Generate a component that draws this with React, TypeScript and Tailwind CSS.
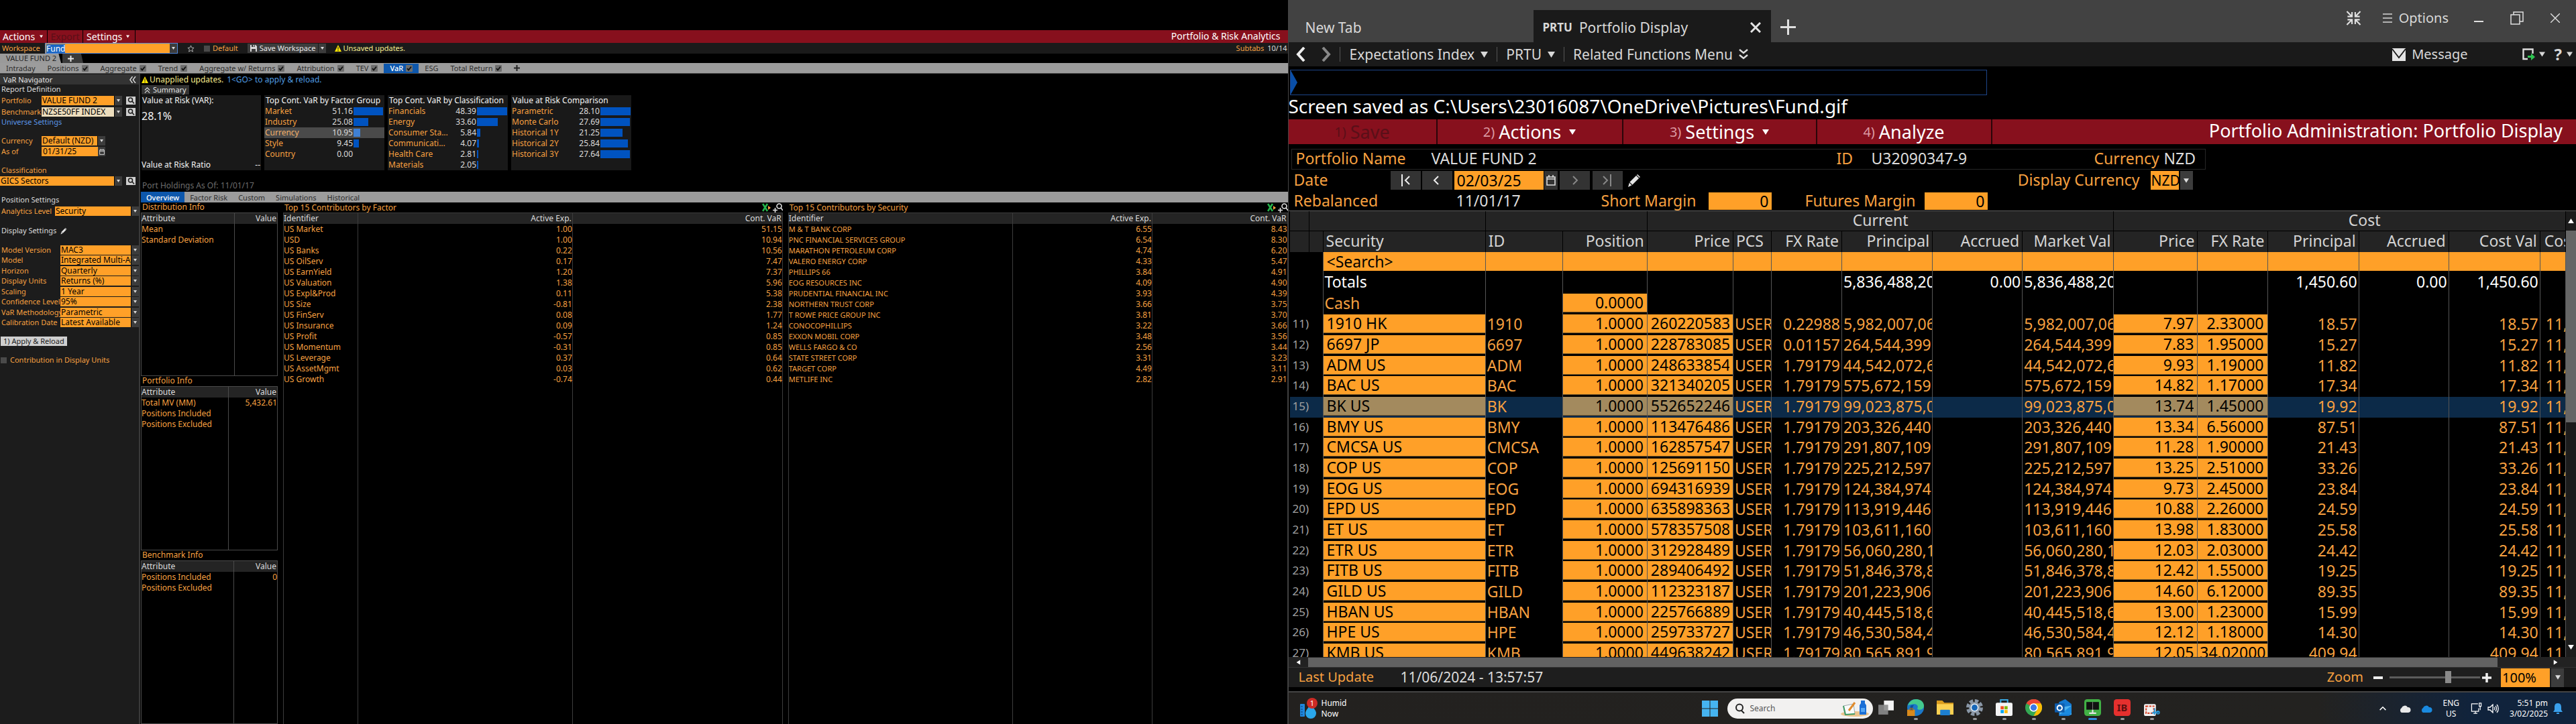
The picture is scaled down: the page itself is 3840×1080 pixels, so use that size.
import React from 'react';

type Row = [string, string, string];

/* ---------- shared small parts ---------- */

function Tri({ className = '' }: { className?: string }) {
  return (
    <svg viewBox="0 0 10 8" className={className} aria-hidden="true">
      <path d="M0 0h10L5 8z" fill="currentColor" />
    </svg>
  );
}

function Warn() {
  return (
    <svg viewBox="0 0 12 12" className="h-[10px] w-[10px] shrink-0" aria-hidden="true">
      <path d="M6 0l6 12H0z" fill="#ffe600" />
      <path d="M6 4v4M6 9v2" stroke="#222" strokeWidth="1.4" />
    </svg>
  );
}

function Pencil({ className = '' }: { className?: string }) {
  return (
    <svg viewBox="0 0 22 22" className={className} aria-hidden="true">
      <path d="M1 21l2-7 12-12 4 4L7 18z" fill="#e4e4e4" />
      <path d="M13 3l5 5M3 14l4 4" stroke="#111" strokeWidth="1.2" />
    </svg>
  );
}

function Calendar({ className = '' }: { className?: string }) {
  return (
    <svg viewBox="0 0 14 16" className={className} fill="none" stroke="#ddd" strokeWidth="1.6" aria-hidden="true">
      <path d="M1 3h12v12H1zM1 6h12M4 0v4M10 0v4" />
    </svg>
  );
}

function FindButton({ label }: { label: string }) {
  return (
    <button aria-label={label} className="flex h-[12px] w-[14px] items-center justify-center bg-[#cfcfcf]">
      <svg viewBox="0 0 14 12" className="h-[12px] w-[14px]" fill="none" stroke="#1a1a1a" strokeWidth="1.5">
        <circle cx="6.5" cy="5" r="3" />
        <path d="M9 7l3 3.5" />
      </svg>
    </button>
  );
}

function Select({
  id,
  value,
  className = '',
  field = 'bg-[#ffa028]',
}: {
  id: string;
  value: string;
  className?: string;
  field?: string;
}) {
  return (
    <span className={`flex h-[14px] min-w-0 ${className}`}>
      <select
        id={id}
        aria-label={id}
        defaultValue={value}
        className={`h-full w-0 min-w-0 flex-1 appearance-none overflow-hidden pl-px text-[12px] leading-[14px] text-black outline-none ${field}`}
      >
        <option>{value}</option>
      </select>
      <span className="flex w-[12px] shrink-0 items-center justify-center border-l border-black bg-[#3c3c3c] text-[#d8d8d8]">
        <Tri className="h-[4px] w-[5px]" />
      </span>
    </span>
  );
}

/* ---------- left window ---------- */

const subTabs: { name: string; check: boolean; active?: boolean }[] = [
  { name: 'Intraday', check: false },
  { name: 'Positions', check: true },
  { name: 'Aggregate', check: true },
  { name: 'Trend', check: true },
  { name: 'Aggregate w/ Returns', check: true },
  { name: 'Attribution', check: true },
  { name: 'TEV', check: true },
  { name: 'VaR', check: true, active: true },
  { name: 'ESG', check: false },
  { name: 'Total Return', check: true },
];

const displaySettings: [string, string][] = [
  ['Model Version', 'MAC3'],
  ['Model', 'Integrated Multi-Asset'],
  ['Horizon', 'Quarterly'],
  ['Display Units', 'Returns (%)'],
  ['Scaling', '1 Year'],
  ['Confidence Level', '95%'],
  ['VaR Methodology', 'Parametric'],
  ['Calibration Date', 'Latest Available'],
];

const factors: Row[] = [
  ['US Market', '1.00', '51.15'],
  ['USD', '1.00', '10.94'],
  ['US Banks', '0.22', '10.56'],
  ['US OilServ', '0.17', '7.47'],
  ['US EarnYield', '1.20', '7.37'],
  ['US Valuation', '1.38', '5.96'],
  ['US Expl&Prod', '0.11', '5.38'],
  ['US Size', '-0.81', '2.38'],
  ['US FinServ', '0.08', '1.77'],
  ['US Insurance', '0.09', '1.24'],
  ['US Profit', '-0.57', '0.85'],
  ['US Momentum', '-0.31', '0.85'],
  ['US Leverage', '0.37', '0.64'],
  ['US AssetMgmt', '0.03', '0.62'],
  ['US Growth', '-0.74', '0.44'],
];

const securities: Row[] = [
  ['M & T BANK CORP', '6.55', '8.43'],
  ['PNC FINANCIAL SERVICES GROUP', '6.54', '8.30'],
  ['MARATHON PETROLEUM CORP', '4.74', '6.20'],
  ['VALERO ENERGY CORP', '4.33', '5.47'],
  ['PHILLIPS 66', '3.84', '4.91'],
  ['EOG RESOURCES INC', '4.09', '4.90'],
  ['PRUDENTIAL FINANCIAL INC', '3.93', '4.39'],
  ['NORTHERN TRUST CORP', '3.66', '3.75'],
  ['T ROWE PRICE GROUP INC', '3.81', '3.70'],
  ['CONOCOPHILLIPS', '3.22', '3.66'],
  ['EXXON MOBIL CORP', '3.48', '3.56'],
  ['WELLS FARGO & CO', '2.56', '3.44'],
  ['STATE STREET CORP', '3.31', '3.23'],
  ['TARGET CORP', '4.49', '3.11'],
  ['METLIFE INC', '2.82', '2.91'],
];

type Bar = { name: string; value: string; width: number; selected?: boolean };

function BarCard({ title, rows }: { title: string; rows: Bar[] }) {
  return (
    <section className="h-[112px] w-[179px] overflow-hidden bg-[#191919]">
      <h3 className="h-[16px] pl-[2px] text-[12px] leading-[16px] whitespace-nowrap text-[#f4f4f4]">{title}</h3>
      {rows.map((r) => (
        <div
          key={r.name}
          className={`flex h-[16px] items-center whitespace-nowrap ${r.selected ? 'bg-[#4a4a4a] text-[#f3b069]' : 'text-[#f7a040]'}`}
        >
          <span className="pl-px">{r.name}</span>
          <span className="flex-1 text-right text-[#dcdcdc]">{r.value}</span>
          <span className="w-[47px] shrink-0 pl-px">
            <span
              className={`block h-[12px] ${r.selected ? 'bg-[#3f80d4]' : 'bg-[#0053c0]'}`}
              style={{ width: r.width }}
            />
          </span>
        </div>
      ))}
    </section>
  );
}

function InfoTable({ title, rows, first }: { title: string; rows: [string, string][]; first: string }) {
  return (
    <section className="flex min-h-0 flex-1 flex-col">
      <h3 className="h-[15px] pl-[2px] leading-[14px] text-[#f7a040]">{title}</h3>
      <div className="min-h-0 flex-1">
        <table className="h-full w-full table-fixed border-separate border-spacing-0 border border-[#4a4a4a]">
          <colgroup>
            <col className={first} />
            <col />
          </colgroup>
          <thead className="bg-[#242424] text-[#dcdcdc]">
            <tr className="h-[16px]">
              <th className="border-r border-[#4a4a4a] text-left font-normal">Attribute</th>
              <th className="pr-px text-right font-normal">Value</th>
            </tr>
          </thead>
          <tbody className="text-[#f7a040]">
            {rows.map(([k, v]) => (
              <tr key={k} className="h-[16px]">
                <td className="border-r border-[#4a4a4a] whitespace-nowrap">{k}</td>
                <td className="text-right">{v}</td>
              </tr>
            ))}
            <tr>
              <td className="border-r border-[#4a4a4a]" />
              <td />
            </tr>
          </tbody>
        </table>
      </div>
    </section>
  );
}

function ContribTable({ title, rows, a, b, nameSize }: { title: string; rows: Row[]; a: string; b: string; nameSize: string }) {
  return (
    <section className="flex min-h-0 min-w-0 flex-1 flex-col">
      <div className="flex h-[15px] items-center justify-between pl-[2px]">
        <h3 className="text-[12px] leading-[14px] text-[#f7a040]">{title}</h3>
        <span className="flex items-center gap-[3px]">
          <button aria-label="Export to spreadsheet">
            <svg viewBox="0 0 13 13" className="h-[13px] w-[13px]" fill="none">
              <path d="M1 1l7 11M8 1L1 12" stroke="#25b34b" strokeWidth="2.6" />
              <path d="M9 4l4 3-4 3z" fill="#f7a040" />
            </svg>
          </button>
          <button aria-label="Search rows">
            <svg viewBox="0 0 15 14" className="h-[14px] w-[15px]" fill="none" stroke="#e4e4e4" strokeWidth="1.6">
              <circle cx="9.5" cy="4.5" r="3.5" />
              <path d="M12 7l3 4M0 10.5h7M3.500 7v7" />
            </svg>
          </button>
        </span>
      </div>
      <div className="min-h-0 flex-1">
        <table className="h-full w-full table-fixed border-separate border-spacing-0 border-x border-t border-[#3c3c3c]">
          <colgroup>
            <col className={a} />
            <col className={b} />
            <col />
          </colgroup>
          <thead className="bg-[#242424] text-[#dcdcdc]">
            <tr className="h-[16px]">
              <th className="border-r border-[#3c3c3c] text-left font-normal">Identifier</th>
              <th className="border-r border-[#3c3c3c] pr-px text-right font-normal">Active Exp.</th>
              <th className="pr-px text-right font-normal">Cont. VaR</th>
            </tr>
          </thead>
          <tbody className="text-[#f7a040]">
            {rows.map(([n, x, y]) => (
              <tr key={n} className="h-[16px]">
                <td className={`border-r border-[#3c3c3c] whitespace-nowrap ${nameSize}`}>{n}</td>
                <td className="border-r border-[#3c3c3c] text-right">{x}</td>
                <td className="text-right">{y}</td>
              </tr>
            ))}
            <tr>
              <td className="border-r border-[#3c3c3c]" />
              <td className="border-r border-[#3c3c3c]" />
              <td />
            </tr>
          </tbody>
        </table>
      </div>
    </section>
  );
}

function Navigator() {
  return (
    <aside className="flex w-[209px] shrink-0 flex-col border-r-2 border-[#3a3a3a] bg-[#1c1c1c] text-[11px] whitespace-nowrap text-[#f7a040]">
      <div className="mt-px flex h-[15px] items-center justify-between bg-[#333] pl-[5px] pr-[4px] text-[#e4e4e4]">
        <h2>VaR Navigator</h2>
        <button aria-label="Collapse navigator">
          <svg viewBox="0 0 10 10" className="h-[10px] w-[10px]" fill="none" stroke="#ddd" strokeWidth="1.4">
            <path d="M4.500 0L.8 5l3.700 5M9 0L5.300 5 9 10" />
          </svg>
        </button>
      </div>
      <div className="h-[16px] pl-[2px] leading-[14px] text-[#dcdcdc]">Report Definition</div>
      <div className="flex h-[16px] items-center pl-[2px]">
        <label htmlFor="Portfolio" className="w-[60px]">Portfolio</label>
        <Select id="Portfolio" value="VALUE FUND 2" className="w-[120px]" />
        <span className="ml-[6px] flex"><FindButton label="Find portfolio" /></span>
      </div>
      <div className="flex h-[17px] items-center pl-[2px]">
        <label htmlFor="Benchmark" className="w-[60px]">Benchmark</label>
        <Select id="Benchmark" value="NZSE50FF INDEX" field="bg-[#ecddbd]" className="w-[120px]" />
        <span className="ml-[6px] flex"><FindButton label="Find benchmark" /></span>
      </div>
      <a href="#universe" className="h-[16px] pl-[2px] leading-[14px] text-[#5a97ea]">Universe Settings</a>
      <div className="mt-[11px] flex h-[16px] items-center pl-[2px]">
        <label htmlFor="Currency" className="w-[60px]">Currency</label>
        <Select id="Currency" value="Default (NZD)" className="w-[95px]" />
      </div>
      <div className="flex h-[16px] items-center pl-[2px]">
        <label htmlFor="asof" className="w-[60px]">As of</label>
        <input id="asof" defaultValue="01/31/25" className="h-[14px] w-[84px] bg-[#ffa028] pl-[2px] text-[12px] text-black outline-none" />
        <button aria-label="Pick date" className="flex h-[14px] w-[11px] items-center justify-center bg-[#3c3c3c]">
          <Calendar className="h-[9px] w-[8px]" />
        </button>
      </div>
      <label htmlFor="Classification" className="mt-[12px] h-[16px] pl-[2px] leading-[16px]">Classification</label>
      <div className="flex h-[16px] items-center">
        <Select id="Classification" value="GICS Sectors" className="w-[182px]" />
        <span className="ml-[6px] flex"><FindButton label="Find classification" /></span>
      </div>
      <div className="mt-[13px] h-[16px] pl-[2px] leading-[14px] text-[#dcdcdc]">Position Settings</div>
      <div className="flex h-[16px] items-center pl-[2px]">
        <label htmlFor="Analytics" className="w-[80px]">Analytics Level</label>
        <Select id="Analytics" value="Security" className="flex-1" />
      </div>
      <div className="mt-[13px] flex h-[16px] items-center gap-[6px] pl-[2px] text-[#dcdcdc]">
        Display Settings
        <button aria-label="Edit display settings"><Pencil className="h-[11px] w-[11px]" /></button>
      </div>
      <div className="mt-[13px] grid h-[124px] grid-cols-1 grid-rows-8">
        {displaySettings.map(([k, v]) => (
          <div key={k} className="flex min-h-0 min-w-0 items-center pl-[2px]">
            <label htmlFor={k} className="w-[88px] shrink-0">{k}</label>
            <Select id={k} value={v} className="flex-1" />
          </div>
        ))}
      </div>
      <div className="mt-[13px] flex pl-px">
        <button className="h-[14px] bg-[#cfcfcf] px-[4px] leading-[14px] text-[#1a1a1a]">
          1) Apply &amp; Reload
        </button>
      </div>
      <label className="mt-[13px] flex h-[16px] items-center gap-[5px] pl-px">
        <input type="checkbox" className="h-[9px] w-[9px] appearance-none bg-[#4a4a4a]" />
        Contribution in Display Units
      </label>
    </aside>
  );
}

function LeftWindow() {
  return (
    <div className="flex h-full min-w-0 flex-1 basis-0 flex-col overflow-hidden bg-black pt-[45px] text-[12px] leading-[16px]">
      <header className="flex h-[19px] shrink-0 items-stretch bg-[#87101d] text-[14px] leading-[18px] text-white">
        <button className="flex w-[71px] items-center gap-[7px] border-r border-black pl-[4px]">
          Actions <Tri className="h-[5px] w-[5px]" />
        </button>
        <button disabled className="w-[53px] border-r border-black text-[#5a0f18]">Export</button>
        <button className="flex w-[78px] items-center gap-[6px] border-r border-black pl-[5px]">
          Settings <Tri className="h-[5px] w-[5px]" />
        </button>
        <h1 className="ml-auto pr-[11px]">Portfolio &amp; Risk Analytics</h1>
      </header>

      <div className="flex h-[16px] shrink-0 items-center bg-[#1a1a1a] text-[11px] text-[#f7a040]">
        <label htmlFor="Workspace" className="w-[67px] pl-[3px]">Workspace</label>
        <span className="flex h-[16px] w-[198px] border border-[#4f86d8]">
          <span className="flex min-w-0 flex-1 items-center bg-[#ffa028] pl-px">
            <input
              id="Workspace"
              defaultValue="Fund"
              className="h-[13px] w-[28px] bg-[#1a66c4] text-[12px] leading-[13px] text-white outline-none"
            />
          </span>
          <button aria-label="Choose workspace" className="flex w-[11px] items-center justify-center bg-[#3c3c3c] text-[#ddd]">
            <Tri className="h-[4px] w-[5px]" />
          </button>
        </span>
        <button aria-label="Favourite" className="ml-[14px]">
          <svg viewBox="0 0 12 12" className="h-[11px] w-[11px]" fill="none" stroke="#bbb">
            <path d="M6 1l1.500 3.500 3.500.3-2.700 2.400.9 3.800L6 9l-3.200 2 .9-3.800L1 4.800l3.500-.3z" />
          </svg>
        </button>
        <label className="ml-[14px] flex items-center gap-[4px]">
          <input type="checkbox" className="h-[9px] w-[9px] appearance-none bg-[#4a4a4a]" />
          Default
        </label>
        <button className="ml-[14px] flex h-[14px] items-center gap-[4px] bg-[#3c3c3c] px-[4px] leading-[14px] whitespace-nowrap text-[#e8e8e8]">
          <svg viewBox="0 0 10 10" className="h-[10px] w-[10px]">
            <path d="M0 0h8l2 2v8H0z" fill="#d8d8d8" />
            <path d="M2 0h5v3H2zM2 6h6v4H2z" fill="#3c3c3c" />
            <path d="M4.500 0h1.500v2.500H4.500z" fill="#d8d8d8" />
          </svg>
          Save Workspace
        </button>
        <button aria-label="Save options" className="ml-px flex h-[14px] w-[11px] items-center justify-center bg-[#3c3c3c] text-[#ddd]">
          <Tri className="h-[4px] w-[5px]" />
        </button>
        <span className="ml-[13px] flex items-center gap-[2px] whitespace-nowrap text-[#f7ec8c]"><Warn />Unsaved updates.</span>
        <span className="ml-auto pr-px">Subtabs <span className="pl-[2px] text-[#dcdcdc]">10/14</span></span>
      </div>

      <div className="flex h-[14px] shrink-0">
        <button className="h-[14px] w-[91px] bg-[#9a9a9a] pl-[9px] text-left text-[11px] leading-[14px] whitespace-nowrap text-[#222] [clip-path:polygon(0_0,96%_0,100%_100%,0_100%)]">
          VALUE FUND 2
        </button>
        <button aria-label="New tab" className="ml-[2px] flex h-[14px] w-[31px] items-center bg-[#3a3a3a] pl-[8px] [clip-path:polygon(0_0,90%_0,100%_100%,0_100%)]">
          <svg viewBox="0 0 9 9" className="h-[9px] w-[9px]"><path d="M4.500 0v9M0 4.500h9" stroke="#e4e4e4" strokeWidth="2" /></svg>
        </button>
      </div>

      <nav className="flex h-[16px] shrink-0 items-center border-b border-[#4a4a4a] bg-[#9c9c9c] text-[11px] text-[#2c2c2c]">
        {subTabs.map((t) => (
          <button
            key={t.name}
            className={`flex h-[14px] items-center gap-[4px] px-[9px] leading-[14px] whitespace-nowrap ${t.active ? 'bg-[#0d57ac] font-medium text-white' : ''}`}
          >
            {t.name}
            {t.check && (
              <svg viewBox="0 0 10 10" className="h-[10px] w-[10px]" fill="none">
                <rect width="10" height="10" rx="1" fill="#6e6e6e" />
                <path d="M2 5l2 2.500L8 2.500" stroke="#111" strokeWidth="1.900" />
              </svg>
            )}
          </button>
        ))}
        <button aria-label="Add subtab" className="ml-[9px]">
          <svg viewBox="0 0 9 9" className="h-[9px] w-[9px]"><path d="M4.500 0v9M0 4.500h9" stroke="#222" strokeWidth="2" /></svg>
        </button>
      </nav>

      <div className="flex min-h-0 flex-1">
        <Navigator />
        <main className="flex min-w-0 flex-1 flex-col pl-px">
          <div className="flex h-[17px] shrink-0 items-center gap-[2px] pl-px whitespace-nowrap text-[#f7ec8c]">
            <Warn />Unapplied updates.
            <span className="pl-[3px] text-[#4f9be0]">1&lt;GO&gt; to apply &amp; reload.</span>
          </div>
          <div className="flex h-[15px] shrink-0 pl-px">
            <button className="flex h-[14px] items-center gap-[4px] bg-[#333] px-[4px] text-[11px] leading-[14px] text-[#e4e4e4]">
              <svg viewBox="0 0 10 10" className="h-[9px] w-[9px]" fill="none" stroke="#ddd" strokeWidth="1.300">
                <path d="M1 5l4-4 4 4M1 9.500l4-4 4 4" />
              </svg>
              Summary
            </button>
          </div>
          <div className="flex h-[112px] shrink-0 gap-[5px] pl-px">
            <section className="flex w-[178px] flex-col bg-[#191919] text-[#f4f4f4]">
              <h3 className="pl-px leading-[16px]">Value at Risk (VAR):</h3>
              <p className="pt-[3px] text-[16px] leading-[24px]">28.1%</p>
              <p className="mt-auto flex justify-between pr-px leading-[16px]"><span>Value at Risk Ratio</span><span>--</span></p>
            </section>
            <BarCard
              title="Top Cont. VaR by Factor Group"
              rows={[
                { name: 'Market', value: '51.16', width: 44 },
                { name: 'Industry', value: '25.08', width: 22 },
                { name: 'Currency', value: '10.95', width: 10, selected: true },
                { name: 'Style', value: '9.45', width: 8 },
                { name: 'Country', value: '0.00', width: 0 },
              ]}
            />
            <BarCard
              title="Top Cont. VaR by Classification"
              rows={[
                { name: 'Financials', value: '48.39', width: 45 },
                { name: 'Energy', value: '33.60', width: 31 },
                { name: 'Consumer Sta...', value: '5.84', width: 5 },
                { name: 'Communicati...', value: '4.07', width: 3 },
                { name: 'Health Care', value: '2.81', width: 2 },
                { name: 'Materials', value: '2.05', width: 2 },
              ]}
            />
            <BarCard
              title="Value at Risk Comparison"
              rows={[
                { name: 'Parametric', value: '28.10', width: 45 },
                { name: 'Monte Carlo', value: '27.69', width: 44 },
                { name: 'Historical 1Y', value: '21.25', width: 33 },
                { name: 'Historical 2Y', value: '25.84', width: 41 },
                { name: 'Historical 3Y', value: '27.64', width: 44 },
              ]}
            />
          </div>
          <p className="h-[32px] shrink-0 pl-[2px] pt-[16px] leading-[14px] text-[#6c6c6c]">Port Holdings As Of: 11/01/17</p>
          <nav className="flex h-[16px] shrink-0 items-stretch bg-[#9c9c9c] text-[11px] leading-[15px] text-[#2c2c2c]">
            <button className="bg-[#0d57ac] px-[8px] font-medium text-white">Overview</button>
            {['Factor Risk', 'Custom', 'Simulations', 'Historical'].map((n) => (
              <button key={n} className="px-[8px] whitespace-nowrap">{n}</button>
            ))}
          </nav>
          <div className="flex min-h-0 flex-1 gap-[8px]">
            <div className="flex w-[204px] shrink-0 flex-col">
              <InfoTable title="Distribution Info" first="w-[139px]" rows={[['Mean', ''], ['Standard Deviation', '']]} />
              <InfoTable
                title="Portfolio Info"
                first="w-[130px]"
                rows={[['Total MV (MM)', '5,432.61'], ['Positions Included', ''], ['Positions Excluded', '']]}
              />
              <InfoTable title="Benchmark Info" first="w-[138px]" rows={[['Positions Included', '0'], ['Positions Excluded', '']]} />
            </div>
            <ContribTable title="Top 15 Contributors by Factor" rows={factors} a="w-[15%]" b="w-[43%]" nameSize="text-[12px]" />
            <ContribTable title="Top 15 Contributors by Security" rows={securities} a="w-[45%]" b="w-[28%]" nameSize="text-[11px]" />
          </div>
        </main>
      </div>
    </div>
  );
}

/* ---------- right window ---------- */

type Holding = {
  sec: string;
  price: string;
  fx: string;
  principal: string;
  costPrice: string;
  costFx: string;
  cost: string;
};

const h = (sec: string, price: string, fx: string, principal: string, costPrice: string, costFx: string, cost: string): Holding => ({
  sec, price, fx, principal, costPrice, costFx, cost,
});

const holdings: Holding[] = [
  h('1910 HK', '2602205830', '0.22988', '5,982,007,06', '7.97', '2.33000', '18.57'),
  h('6697 JP', '2287830857', '0.01157', '264,544,399', '7.83', '1.95000', '15.27'),
  h('ADM US', '248633854.', '1.79179', '44,542,072,6', '9.93', '1.19000', '11.82'),
  h('BAC US', '3213402058', '1.79179', '575,672,159', '14.82', '1.17000', '17.34'),
  h('BK US', '552652246.', '1.79179', '99,023,875,0', '13.74', '1.45000', '19.92'),
  h('BMY US', '1134764864', '1.79179', '203,326,440', '13.34', '6.56000', '87.51'),
  h('CMCSA US', '1628575477', '1.79179', '291,807,109', '11.28', '1.90000', '21.43'),
  h('COP US', '1256911506', '1.79179', '225,212,597', '13.25', '2.51000', '33.26'),
  h('EOG US', '6943169396', '1.79179', '124,384,974', '9.73', '2.45000', '23.84'),
  h('EPD US', '6358983639', '1.79179', '113,919,446', '10.88', '2.26000', '24.59'),
  h('ET US', '5783575087', '1.79179', '103,611,160', '13.98', '1.83000', '25.58'),
  h('ETR US', '3129284898', '1.79179', '56,060,280,1', '12.03', '2.03000', '24.42'),
  h('FITB US', '2894064924', '1.79179', '51,846,378,8', '12.42', '1.55000', '19.25'),
  h('GILD US', '1123231870', '1.79179', '201,223,906', '14.60', '6.12000', '89.35'),
  h('HBAN US', '2257668897', '1.79179', '40,445,518,6', '13.00', '1.23000', '15.99'),
  h('HPE US', '2597337278', '1.79179', '46,530,584,4', '12.12', '1.18000', '14.30'),
  h('KMB US', '4496382428', '1.79179', '80,565,891,9', '12.05', '34.02000', '409.94'),
];

const tdBase = 'overflow-hidden border-r border-[#555] whitespace-nowrap';

function Cell({ children, right = false, className = 'px-[2px]' }: { children?: React.ReactNode; right?: boolean; className?: string }) {
  return <td className={`${tdBase} pb-[3px] ${className} ${right ? 'text-right' : ''}`}>{children}</td>;
}

function EditCell({
  value,
  label,
  right = false,
  selected = false,
  tight = false,
}: {
  value: string;
  label: string;
  right?: boolean;
  selected?: boolean;
  tight?: boolean;
}) {
  return (
    <td className={`${tdBase} align-top`}>
      <input
        aria-label={label}
        defaultValue={value}
        className={`block h-[28px] w-full border-b border-[#7a5a2a] pb-px leading-[26px] text-black outline-none ${tight ? 'px-[2px]' : 'px-[5px]'} ${right ? 'text-right' : ''} ${selected ? 'bg-[#a38a5e]' : 'bg-[#ffa028]'}`}
      />
    </td>
  );
}

const columns: { name: string; w: string; left?: boolean }[] = [
  { name: 'ID', w: 'w-[115px]', left: true },
  { name: 'Position', w: 'w-[126px]' },
  { name: 'Price', w: 'w-[128px]' },
  { name: 'PCS', w: 'w-[57px]', left: true },
  { name: 'FX Rate', w: 'w-[105px]' },
  { name: 'Principal', w: 'w-[135px]' },
  { name: 'Accrued', w: 'w-[134px]' },
  { name: 'Market Val', w: 'w-[136px]' },
  { name: 'Price', w: 'w-[125px]' },
  { name: 'FX Rate', w: 'w-[104px]' },
  { name: 'Principal', w: 'w-[136px]' },
  { name: 'Accrued', w: 'w-[134px]' },
  { name: 'Cost Val', w: 'w-[136px]' },
];

function HoldingsTable() {
  const th = 'overflow-hidden border-r border-black font-normal whitespace-nowrap';
  return (
    <table className="w-full table-fixed border-separate border-spacing-0 text-[23px] leading-[26px]">
      <colgroup>
        <col className="w-[29px]" />
        <col className="w-[21px]" />
        <col className="w-[242px]" />
        {columns.map((c, i) => (
          <col key={i} className={c.w} />
        ))}
        <col className="w-[38px]" />
      </colgroup>
      <thead className="bg-[#242424] text-[#d4d4d4]">
        <tr className="h-[30px]">
          <th className={`${th} border-b`} />
          <th colSpan={2} className={`${th} border-b`} />
          <th colSpan={2} className={`${th} border-b`} />
          <th colSpan={6} className={`${th} border-b pb-[3px] text-center`}>Current</th>
          <th colSpan={6} className={`${th} border-b pb-[3px] pl-[74px] text-center`}>Cost</th>
        </tr>
        <tr className="h-[31px]">
          <th className={th} />
          <th className={th} />
          <th className={`${th} pb-[3px] pl-[4px] text-left`}>Security</th>
          {columns.map((c, i) => (
            <th key={i} className={`${th} px-[4px] pb-[3px] ${c.left ? 'text-left' : 'text-right'}`}>{c.name}</th>
          ))}
          <th className={`${th} pb-[3px] pl-[6px] text-left`}>Cos</th>
        </tr>
      </thead>
      <tbody className="text-[#f7a040]">
        <tr className="h-[29px]">
          <td />
          <td className="border-r border-[#555]" />
          <td className={`${tdBase} align-top`}>
            <input aria-label="Search security" defaultValue="<Search>" className="block h-[28px] w-full bg-[#ffa028] px-[5px] leading-[26px] text-black outline-none" />
          </td>
          {[...columns, null].map((_, i) => (
            <td key={i} className={`${tdBase} align-top`}>
              <input aria-label={`Filter column ${i + 2}`} className="block h-[28px] w-full bg-[#ffa028] outline-none" />
            </td>
          ))}
        </tr>
        <tr className="h-[33px] text-white">
          <td />
          <td className="border-r border-[#555]" />
          <Cell>Totals</Cell>
          <Cell /><Cell /><Cell /><Cell /><Cell />
          <Cell>5,836,488,20</Cell>
          <Cell right>0.00</Cell>
          <Cell>5,836,488,20</Cell>
          <Cell /><Cell />
          <Cell right>1,450.60</Cell>
          <Cell right>0.00</Cell>
          <Cell right>1,450.60</Cell>
          <Cell />
        </tr>
        <tr className="h-[31px]">
          <td />
          <td className="border-r border-[#555]" />
          <Cell>Cash</Cell>
          <Cell />
          <EditCell value="0.0000" label="Cash position" right />
          {columns.slice(1).map((_, i) => (
            <Cell key={i} />
          ))}
        </tr>
        {holdings.map((r, i) => {
          const sel = r.sec === 'BK US';
          const id = r.sec.split(' ')[0];
          return (
            <tr key={r.sec} className={`${i % 3 === 2 ? 'h-[30px]' : 'h-[31px]'} ${sel ? 'bg-[#0c2a48]' : ''}`}>
              <td className="overflow-hidden pb-[3px] pl-[4px] text-[17px] whitespace-nowrap text-[#a0a0a0]">{i + 11})</td>
              <td className="border-r border-[#555]" />
              <EditCell value={r.sec} label={`Security ${i + 11}`} selected={sel} />
              <Cell>{id}</Cell>
              <EditCell value="1.0000" label={`${id} position`} right selected={sel} />
              <EditCell value={r.price} label={`${id} price`} selected={sel} />
              <Cell>USER</Cell>
              <Cell right>{r.fx}</Cell>
              <Cell>{r.principal}</Cell>
              <Cell />
              <Cell>{r.principal}</Cell>
              <EditCell value={r.costPrice} label={`${id} cost price`} right selected={sel} />
              <EditCell value={r.costFx} label={`${id} cost FX rate`} right selected={sel} tight={r.costFx.length > 7} />
              <Cell right>{r.cost}</Cell>
              <Cell />
              <Cell right>{r.cost}</Cell>
              <Cell className="pl-[8px]">11,</Cell>
            </tr>
          );
        })}
      </tbody>
    </table>
  );
}

function NumBtn({ n, label, w, menu = false, disabled = false }: { n: number; label: string; w: string; menu?: boolean; disabled?: boolean }) {
  return (
    <button disabled={disabled} className={`flex shrink-0 items-center justify-center border-r-2 border-[#2a0509] whitespace-nowrap ${w} ${disabled ? 'text-[#5a0f18]' : 'text-white'}`}>
      <span className={`mr-[6px] text-[20px] ${disabled ? '' : 'text-[#dc9aa2]'}`}>{n})</span>
      {label}
      {menu && <Tri className="ml-[12px] h-[8px] w-[10px]" />}
    </button>
  );
}

function DateStep({ label, d, off = false }: { label: string; d: string; off?: boolean }) {
  return (
    <button aria-label={label} className="flex h-[28px] w-[45px] items-center justify-center bg-[#333]">
      <svg viewBox="0 0 20 20" className="h-[20px] w-[20px]" fill="none" stroke={off ? '#888' : '#eee'} strokeWidth="2">
        <path d={d} />
      </svg>
    </button>
  );
}

function TaskIcon({ label, dot, children }: { label: string; dot?: 'on' | 'idle'; children: React.ReactNode }) {
  return (
    <button aria-label={label} className="flex h-full w-[44px] flex-col items-center pt-[10px]">
      <svg viewBox="0 0 24 24" className="h-[25px] w-[25px]">{children}</svg>
      {dot && <span className={`mt-[3px] h-[3px] rounded-full ${dot === 'on' ? 'w-[13px] bg-[#2f8fe0]' : 'w-[6px] bg-[#9a9a9a]'}`} />}
    </button>
  );
}

function Taskbar() {
  return (
    <footer className="flex h-[47px] shrink-0 items-stretch bg-linear-to-r from-[#23211f] from-0% via-[#232220] via-80% to-[#10233c] to-92% text-[12px] leading-[16px] text-white">
      <button className="flex w-[616px] items-center gap-[6px] pl-[17px] text-left">
        <svg viewBox="0 0 26 32" className="h-[32px] w-[26px]">
          <rect x="0" y="9" width="7" height="19" rx="1" fill="#1f86dd" />
          <path d="M1 13h3M1 17h3M1 21h3M1 25h3" stroke="#0b3c78" />
          <path d="M16 10c6 7 8 10 8 13a8 8 0 0 1-16 0c0-3 2-6 8-13z" fill="#2aa6ea" />
          <circle cx="18" cy="8" r="8" fill="#cc2b25" />
          <text x="18" y="12" textAnchor="middle" fontSize="11" fill="#fff">1</text>
        </svg>
        <span>Humid<br />Now</span>
      </button>
      <button aria-label="Start" className="flex w-[38px] items-center">
        <svg viewBox="0 0 24 24" className="h-[24px] w-[24px]">
          <path d="M0 0h11.500v11.500H0zM12.500 0H24v11.500H12.500zM0 12.500h11.500V24H0zM12.500 12.500H24V24H12.500z" fill="#46b4f0" />
        </svg>
      </button>
      <label className="my-auto flex h-[30px] w-[217px] items-center gap-[8px] rounded-full bg-[#f2f1f0] pl-[10px] pr-[5px]">
        <svg viewBox="0 0 16 16" className="h-[16px] w-[16px] shrink-0" fill="none" stroke="#222" strokeWidth="2">
          <circle cx="8" cy="6.500" r="5" /><path d="M11 11l4 4" />
        </svg>
        <input aria-label="Search" placeholder="Search" className="min-w-0 flex-1 text-[12px] text-black outline-none placeholder:text-[#555]" />
        <svg viewBox="0 0 44 26" className="h-[26px] w-[44px] shrink-0">
          <ellipse cx="22" cy="21" rx="21" ry="4" fill="#ecc48c" />
          <path d="M5 9l15-3 2 15-15 1z" fill="#fafafa" stroke="#9aa" />
          <path d="M5 9l3 13 14-1" fill="none" stroke="#3f9b62" strokeWidth="2" />
          <path d="M22 4l-9 12" stroke="#e08a2c" strokeWidth="3" />
          <path d="M29 8l2-3V1h6v4l2 3v14H29z" fill="#1b6fd6" />
          <path d="M31 12h6v6h-6z" fill="#55a6f5" />
        </svg>
      </label>
      <nav className="-ml-[2px] flex">
        <TaskIcon label="Task view">
          <rect x="9" y="2" width="14" height="14" fill="#f4f4f4" />
          <rect x="1" y="8" width="14" height="14" fill="#8c8c8c" opacity=".9" />
        </TaskIcon>
        <TaskIcon label="Edge" dot="idle">
          <circle cx="12" cy="12" r="12" fill="#1b79c9" />
          <path d="M1 9C3 3 8 0 13 0c7 0 11 5 11 9 0 5-4 6-7 6-2 0-3-1-2-3 1-3-2-5-5-5-4 0-7 1-9 2z" fill="#43c98e" />
          <path d="M10 8c-3 3-3 9 1 12-5-1-8-6-6-11z" fill="#0d4f9c" />
          <rect x="0" y="15" width="11" height="9" fill="#d98a1c" />
          <rect x="4" y="13" width="4" height="3" fill="none" stroke="#b86c0c" />
        </TaskIcon>
        <TaskIcon label="File Explorer">
          <path d="M0 2h8l3 3h13v17H0z" fill="#d99c1e" />
          <path d="M0 7h24v15H0z" fill="#fbd152" />
          <rect x="5" y="15" width="14" height="8" rx="1" fill="#1d7fd0" />
        </TaskIcon>
        <TaskIcon label="Settings" dot="idle">
          <circle cx="12" cy="12" r="9.500" fill="none" stroke="#8a97a6" strokeWidth="5" strokeDasharray="5 2.460" />
          <circle cx="12" cy="12" r="8" fill="#8a97a6" />
          <circle cx="12" cy="12" r="5" fill="#1767b8" stroke="#e8eef4" strokeWidth="1.500" />
        </TaskIcon>
        <TaskIcon label="Store" dot="idle">
          <path d="M7 6V1h10v5" fill="none" stroke="#38a7e0" strokeWidth="2" />
          <rect x="0" y="5" width="24" height="19" rx="2" fill="#f4f4f4" />
          <path d="M7 10h4.500v4.500H7z" fill="#f25022" /><path d="M12.500 10H17v4.500h-4.500z" fill="#7fba00" />
          <path d="M7 15.500h4.500V20H7z" fill="#00a4ef" /><path d="M12.500 15.500H17V20h-4.500z" fill="#ffb900" />
        </TaskIcon>
        <TaskIcon label="Chrome" dot="idle">
          <circle cx="12" cy="12" r="12" fill="#34a853" />
          <path d="M12 12L1.600 6A12 12 0 0 1 22.400 6z" fill="#ea4335" />
          <path d="M12 0a12 12 0 0 1 10.400 6H12z" fill="#ea4335" />
          <path d="M12 12V6h10.400A12 12 0 0 1 12 24l5-9z" fill="#fbbc05" />
          <circle cx="12" cy="12" r="6" fill="#fff" /><circle cx="12" cy="12" r="4.500" fill="#3b78e7" />
        </TaskIcon>
        <TaskIcon label="Outlook" dot="idle">
          <path d="M6 4l9-4 9 7v15l-4 2H6z" fill="#1378cf" />
          <path d="M7 12l17-3v13H7z" fill="#4fb4f0" /><path d="M24 9L7 22h15l2-2z" fill="#1b8be0" />
          <rect x="0" y="6" width="14" height="13" rx="1" fill="#0f5cab" />
          <circle cx="7" cy="12.500" r="3.500" fill="none" stroke="#fff" strokeWidth="2" />
        </TaskIcon>
        <TaskIcon label="Terminal" dot="on">
          <rect width="24" height="24" rx="4" fill="#41b045" />
          <rect x="3" y="4" width="18" height="11" fill="#111" /><path d="M12 4v11" stroke="#777" />
          <path d="M12 15v4M7 20h10" stroke="#e4e4e4" strokeWidth="2" />
        </TaskIcon>
        <TaskIcon label="IB" dot="idle">
          <rect width="24" height="24" rx="4" fill="#e5302e" />
          <text x="12" y="17" textAnchor="middle" fontSize="14" fontWeight="700" fill="#5c0f10">IB</text>
        </TaskIcon>
        <TaskIcon label="Snipping Tool" dot="idle">
          <rect x="1" y="7" width="17" height="17" rx="2" fill="#f2f2f2" />
          <rect x="4" y="10" width="11" height="10" fill="none" stroke="#d9472b" strokeWidth="2" strokeDasharray="3 1.500" />
          <path d="M16 13v9M12 20l10-2" stroke="#2596d8" strokeWidth="2" />
          <circle cx="21" cy="19" r="2" fill="none" stroke="#2596d8" strokeWidth="1.500" />
        </TaskIcon>
      </nav>
      <div className="ml-auto flex items-center pr-[20px]">
        <button aria-label="Show hidden icons">
          <svg viewBox="0 0 12 8" className="h-[7px] w-[12px]" fill="none" stroke="#fff" strokeWidth="1.700"><path d="M1 7l5-5 5 5" /></svg>
        </button>
        <svg viewBox="0 0 18 12" className="ml-[18px] h-[12px] w-[18px]"><path d="M4 12a4 4 0 0 1 0-7 5 5 0 0 1 9-1 4 4 0 0 1 1 8z" fill="#e8e8e8" /></svg>
        <svg viewBox="0 0 18 12" className="ml-[14px] h-[12px] w-[18px]"><path d="M4 12a4 4 0 0 1 0-7 5 5 0 0 1 9-1 4 4 0 0 1 1 8z" fill="#1a8ae0" /></svg>
        <button className="ml-[15px] text-center">ENG<br />US</button>
        <svg viewBox="0 0 17 18" className="ml-[17px] h-[17px] w-[17px]" fill="none" stroke="#fff" strokeWidth="1.300">
          <path d="M11 2H1v12h11V9M4 17h6M7 14v3M13 1h3v5h-3zM14.500 6v6" />
        </svg>
        <svg viewBox="0 0 17 14" className="ml-[8px] h-[14px] w-[17px]" fill="none" stroke="#fff" strokeWidth="1.300">
          <path d="M1 5h3l4-4v12L4 9H1zM10 5c1 1 1 3 0 4M12 3c2 2 2 6 0 8M14 1c3 3 3 9 0 12" />
        </svg>
        <button className="ml-[16px] text-right whitespace-nowrap">5:51 pm<br />3/02/2025</button>
        <svg viewBox="0 0 14 16" className="ml-[8px] h-[16px] w-[14px]">
          <path d="M7 0c4 0 5 3 5 6v4l2 3H0l2-3V6c0-3 1-6 5-6z" fill="#3aa0ec" /><path d="M5 14h4v2H5z" fill="#3aa0ec" />
        </svg>
      </div>
    </footer>
  );
}

function RightWindow() {
  const sep = 'h-[22px] w-px bg-[#555]';
  return (
    <div className="flex h-full min-w-0 flex-1 basis-0 flex-col overflow-hidden border-l border-[#444] bg-black text-[23px] leading-[28px]">
      <div className="flex h-[63px] shrink-0 bg-[#424242] text-[21px] text-[#d8d8d8]">
        <button className="mt-[15px] flex h-[48px] w-[365px] items-center pl-[25px] pt-[3px]">New Tab</button>
        <div className="mt-[15px] flex h-[48px] w-[354px] items-center bg-[#1a1a1a] pl-[14px] pr-[15px] pt-[3px]">
          <span className="mr-[10px] text-[17px] font-bold">PRTU</span>
          <span>Portfolio Display</span>
          <button aria-label="Close tab" className="ml-auto">
            <svg viewBox="0 0 16 16" className="h-[16px] w-[16px]" stroke="#e4e4e4" strokeWidth="3"><path d="M1 1l14 14M15 1L1 15" /></svg>
          </button>
        </div>
        <button aria-label="New tab" className="ml-[14px] mt-[17px]">
          <svg viewBox="0 0 23 23" className="h-[23px] w-[23px]" stroke="#e0e0e0" strokeWidth="3"><path d="M11.500 0v23M0 11.500h23" /></svg>
        </button>
        <div className="ml-auto flex h-[54px] items-center pr-[24px] text-[20px]">
          <button aria-label="Compact view">
            <svg viewBox="0 0 23 23" className="h-[22px] w-[23px]" fill="none" stroke="#e0e0e0" strokeWidth="2.200">
              <path d="M1 1l7 7M9 2v7H2M22 1l-7 7M14 2v7h7M1 22l7-7M9 21v-7H2M22 22l-7-7M14 21v-7h7" />
            </svg>
          </button>
          <button className="ml-[32px] flex items-center gap-[10px]">
            <svg viewBox="0 0 14 14" className="h-[14px] w-[14px]" stroke="#d8d8d8" strokeWidth="1.500"><path d="M0 1h14M0 7h14M0 13h14" /></svg>
            Options
          </button>
          <button aria-label="Minimize" className="ml-[38px] pt-[10px]">
            <svg viewBox="0 0 14 10" className="h-[10px] w-[14px]" stroke="#e0e0e0" strokeWidth="2"><path d="M0 5h14" /></svg>
          </button>
          <button aria-label="Restore" className="ml-[40px]">
            <svg viewBox="0 0 20 20" className="h-[20px] w-[20px]" fill="none" stroke="#e0e0e0" strokeWidth="1.500">
              <path d="M1 5h13v14H1zM5 5V1h14v14h-5" />
            </svg>
          </button>
          <button aria-label="Close" className="ml-[40px]">
            <svg viewBox="0 0 14 14" className="h-[14px] w-[14px]" stroke="#e0e0e0" strokeWidth="1.400"><path d="M0 0l14 14M14 0L0 14" /></svg>
          </button>
        </div>
      </div>

      <nav className="flex h-[36px] shrink-0 items-center bg-[#1a1a1a] pl-[11px] pr-[5px] text-[21px] leading-[26px] whitespace-nowrap text-[#d8d8d8]">
        <button aria-label="Back">
          <svg viewBox="0 0 14 22" className="h-[22px] w-[14px]" fill="none" stroke="#eee" strokeWidth="4"><path d="M12 1L3 11l9 10" /></svg>
        </button>
        <button aria-label="Forward" className="ml-[24px]">
          <svg viewBox="0 0 14 22" className="h-[22px] w-[14px]" fill="none" stroke="#888" strokeWidth="4"><path d="M2 1l9 10-9 10" /></svg>
        </button>
        <span className={`ml-[13px] mr-[14px] ${sep}`} />
        <button className="flex items-center gap-[9px]">Expectations Index <Tri className="h-[9px] w-[11px]" /></button>
        <span className={`mx-[13px] ${sep}`} />
        <button className="flex items-center gap-[9px]">PRTU <Tri className="h-[9px] w-[11px]" /></button>
        <span className={`mx-[13px] ${sep}`} />
        <button className="flex items-center gap-[9px]">
          Related Functions Menu
          <svg viewBox="0 0 14 16" className="h-[16px] w-[14px]" fill="none" stroke="#ddd" strokeWidth="2.400"><path d="M1 1l6 5 6-5M1 9l6 5 6-5" /></svg>
        </button>
        <button className="ml-auto flex items-center gap-[9px] text-[20px]">
          <svg viewBox="0 0 20 19" className="h-[19px] w-[20px]"><path d="M0 0h20v19H0z" fill="#e4e4e4" /><path d="M0 1l10 13L20 1" fill="none" stroke="#1a1a1a" strokeWidth="1.800" /></svg>
          Message
        </button>
        <button aria-label="Export" className="ml-[81px] flex items-center gap-[6px]">
          <svg viewBox="0 0 19 18" className="h-[18px] w-[19px]" fill="none"><path d="M8 16H1.500V1.500h14V8" stroke="#ddd" strokeWidth="2.400" /><path d="M8 11h5V7.500l6 5.500-6 5v-4H8z" fill="#2fc552" /></svg>
          <Tri className="h-[8px] w-[9px]" />
        </button>
        <button className="ml-[14px] flex items-center gap-[7px] text-[24px] font-bold">? <Tri className="h-[8px] w-[9px]" /></button>
      </nav>

      <div className="mt-[5px] ml-[2px] flex h-[38px] w-[1039px] shrink-0 border border-[#1c4488]">
        <svg viewBox="0 0 10 36" className="h-[36px] w-[10px]" preserveAspectRatio="none"><path d="M0 0l10 18L0 36z" fill="#0a4fa8" /></svg>
        <input aria-label="Command line" className="min-w-0 flex-1 bg-black text-white outline-none" />
      </div>
      <p className="h-[36px] shrink-0 text-[28px] leading-[32px] whitespace-nowrap text-white">
        Screen saved as C:\Users\23016087\OneDrive\Pictures\Fund.gif
      </p>

      <header className="flex h-[37px] shrink-0 bg-[#87101d] text-[27px] leading-[34px] text-white">
        <NumBtn n={1} label="Save" w="w-[222px]" disabled />
        <NumBtn n={2} label="Actions" w="w-[277px]" menu />
        <NumBtn n={3} label="Settings" w="w-[289px]" menu />
        <NumBtn n={4} label="Analyze" w="w-[261px]" />
        <h1 className="ml-auto pr-[20px] whitespace-nowrap">Portfolio Administration: Portfolio Display</h1>
      </header>

      <div className="mt-[7px] ml-[4px] flex h-[31px] w-[1363px] shrink-0 items-center border border-[#262626] pb-[3px] pl-[6px] whitespace-nowrap text-[#dcdcdc]">
        <span className="w-[202px] text-[#f7a040]">Portfolio Name</span>
        <span className="w-[604px]">VALUE FUND 2</span>
        <span className="w-[52px] text-[#f7a040]">ID</span>
        <span className="w-[332px]">U32090347-9</span>
        <span className="w-[104px] text-[#f7a040]">Currency</span>
        <span>NZD</span>
      </div>
      <div className="flex h-[32px] w-[1348px] shrink-0 items-center pl-[8px] whitespace-nowrap text-[#f7a040]">
        <label htmlFor="date" className="w-[144px] pb-[2px]">Date</label>
        <DateStep label="First date" d="M5 1v18M16 4l-6 6 6 6" />
        <span className="w-[2px]" />
        <DateStep label="Previous date" d="M12 4l-6 6 6 6" />
        <input id="date" defaultValue="02/03/25" className="ml-[3px] h-[28px] w-[133px] bg-[#ffa028] pl-[4px] text-black outline-none" />
        <button aria-label="Pick date" className="ml-px flex h-[28px] w-[20px] items-center justify-center bg-[#333]"><Calendar className="h-[16px] w-[14px]" /></button>
        <span className="w-[3px]" />
        <DateStep label="Next date" d="M8 4l6 6-6 6" off />
        <span className="w-[4px]" />
        <DateStep label="Last date" d="M15 1v18M4 4l6 6-6 6" off />
        <button aria-label="Edit date" className="ml-[7px]"><Pencil className="h-[22px] w-[22px]" /></button>
        <label htmlFor="dispcur" className="ml-auto mr-[16px] pb-[2px]">Display Currency</label>
        <select id="dispcur" className="h-[28px] w-[42px] appearance-none bg-[#ffa028] pl-px text-[21px] text-black outline-none"><option>NZD</option></select>
        <span className="ml-[2px] flex h-[28px] w-[19px] items-center justify-center bg-[#3c3c3c] text-[#ddd]"><Tri className="h-[7px] w-[8px]" /></span>
      </div>
      <div className="flex h-[29px] shrink-0 items-center pl-[8px] whitespace-nowrap text-[#f7a040]">
        <span className="w-[242px] pb-[2px]">Rebalanced</span>
        <span className="w-[216px] pb-[2px] text-[#dcdcdc]">11/01/17</span>
        <label htmlFor="short" className="w-[160px] pb-[2px]">Short Margin</label>
        <input id="short" defaultValue="0" className="h-[26px] w-[94px] bg-[#ffa028] pr-[4px] text-right text-black outline-none" />
        <label htmlFor="futures" className="ml-[50px] w-[178px] pb-[2px]">Futures Margin</label>
        <input id="futures" defaultValue="0" className="h-[26px] w-[94px] bg-[#ffa028] pr-[4px] text-right text-black outline-none" />
      </div>

      <div className="flex min-h-0 flex-1 border-t border-[#5a5a5a] pl-[2px]">
        <div className="min-w-0 flex-1 overflow-hidden"><HoldingsTable /></div>
        <div className="flex w-[15px] shrink-0 flex-col items-center bg-[#1c1c1c] text-white">
          <span className="flex h-[29px] items-center"><Tri className="h-[7px] w-[9px] rotate-180" /></span>
          <span className="h-[43%] w-full bg-[#666]" />
          <span className="mt-auto flex h-[29px] items-center"><Tri className="h-[7px] w-[9px]" /></span>
        </div>
      </div>
      <div className="flex h-[15px] shrink-0 items-center bg-[#222] text-white">
        <span className="flex w-[29px] justify-center"><Tri className="h-[6px] w-[9px] rotate-90" /></span>
        <span className="h-[14px] flex-1 bg-[#626262]" />
        <span className="flex w-[117px] justify-end pr-[26px]"><Tri className="h-[6px] w-[9px] -rotate-90" /></span>
      </div>
      <div className="flex h-[30px] shrink-0 items-center border-t border-[#333] bg-[#1e1e1e] pl-[15px] pr-[18px] text-[20px] whitespace-nowrap text-[#f7a040]">
        <span className="w-[152px] pb-[2px]">Last Update</span>
        <span className="pb-[2px] text-[21px] text-[#dcdcdc]">11/06/2024 - 13:57:57</span>
        <label htmlFor="zoom" className="ml-auto mr-[15px] pb-[2px]">Zoom</label>
        <button aria-label="Zoom out" className="mr-[10px]"><svg viewBox="0 0 14 14" className="h-[14px] w-[14px]" stroke="#eee" strokeWidth="4"><path d="M0 7h14" /></svg></button>
        <input
          id="zoom"
          type="range"
          defaultValue={66}
          className="h-[18px] w-[135px] appearance-none bg-transparent [&::-webkit-slider-runnable-track]:h-[3px] [&::-webkit-slider-runnable-track]:bg-[#5c5c5c] [&::-webkit-slider-thumb]:-mt-[8px] [&::-webkit-slider-thumb]:h-[18px] [&::-webkit-slider-thumb]:w-[9px] [&::-webkit-slider-thumb]:appearance-none [&::-webkit-slider-thumb]:bg-[#8a8a8a]"
        />
        <button aria-label="Zoom in" className="ml-[3px] mr-[14px]"><svg viewBox="0 0 14 14" className="h-[14px] w-[14px]" stroke="#eee" strokeWidth="3.500"><path d="M0 7h14M7 0v14" /></svg></button>
        <select aria-label="Zoom level" className="h-[28px] w-[73px] appearance-none bg-[#ffa028] pl-[2px] text-black outline-none"><option>100%</option></select>
        <span className="ml-[2px] flex h-[28px] w-[19px] items-center justify-center bg-[#3c3c3c] text-[#ddd]"><Tri className="h-[7px] w-[8px]" /></span>
      </div>
      <div className="h-[8px] shrink-0 border-b-2 border-[#444] bg-black" />
      <Taskbar />
    </div>
  );
}

export default function App() {
  return (
    <div className="flex h-screen w-full overflow-hidden bg-black font-['Noto_Sans','Open_Sans',sans-serif]">
      <LeftWindow />
      <RightWindow />
    </div>
  );
}
